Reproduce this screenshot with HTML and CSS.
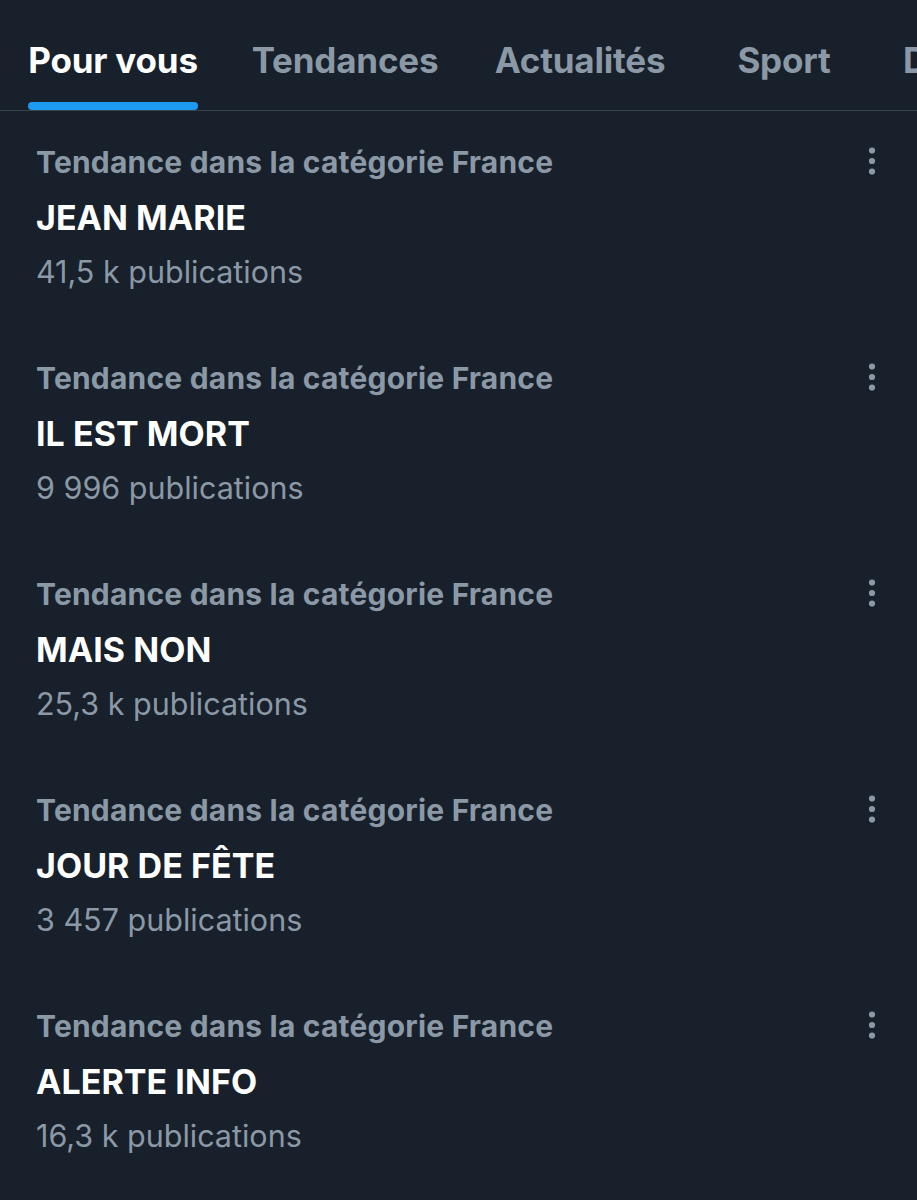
FILE: index.html
```html
<!DOCTYPE html>
<html lang="fr">
<head>
<meta charset="utf-8">
<link rel="stylesheet" href="styles.css">
</head>
<body>
<nav class="tabs">
  <div class="tab tab-active tab-1"><span class="tab-label">Pour vous</span><span class="tab-indicator"></span></div>
  <div class="tab tab-2"><span class="tab-label">Tendances</span></div>
  <div class="tab tab-3"><span class="tab-label">Actualités</span></div>
  <div class="tab tab-4"><span class="tab-label">Sport</span></div>
  <div class="tab tab-5"><span class="tab-label">Divertissement</span></div>
</nav>
<main class="list">
  <section class="trend">
    <div class="trend-head"><span class="trend-cat">Tendance dans la catégorie France</span><svg class="more" viewBox="0 0 8 30" width="8" height="30"><circle cx="4" cy="4.5" r="3.1"/><circle cx="4" cy="15" r="3.1"/><circle cx="4" cy="25.5" r="3.1"/></svg></div>
    <div class="trend-title">JEAN MARIE</div>
    <div class="trend-count">41,5 k publications</div>
  </section>
  <section class="trend">
    <div class="trend-head"><span class="trend-cat">Tendance dans la catégorie France</span><svg class="more" viewBox="0 0 8 30" width="8" height="30"><circle cx="4" cy="4.5" r="3.1"/><circle cx="4" cy="15" r="3.1"/><circle cx="4" cy="25.5" r="3.1"/></svg></div>
    <div class="trend-title">IL EST MORT</div>
    <div class="trend-count">9 996 publications</div>
  </section>
  <section class="trend">
    <div class="trend-head"><span class="trend-cat">Tendance dans la catégorie France</span><svg class="more" viewBox="0 0 8 30" width="8" height="30"><circle cx="4" cy="4.5" r="3.1"/><circle cx="4" cy="15" r="3.1"/><circle cx="4" cy="25.5" r="3.1"/></svg></div>
    <div class="trend-title">MAIS NON</div>
    <div class="trend-count">25,3 k publications</div>
  </section>
  <section class="trend">
    <div class="trend-head"><span class="trend-cat">Tendance dans la catégorie France</span><svg class="more" viewBox="0 0 8 30" width="8" height="30"><circle cx="4" cy="4.5" r="3.1"/><circle cx="4" cy="15" r="3.1"/><circle cx="4" cy="25.5" r="3.1"/></svg></div>
    <div class="trend-title">JOUR DE FÊTE</div>
    <div class="trend-count">3 457 publications</div>
  </section>
  <section class="trend">
    <div class="trend-head"><span class="trend-cat">Tendance dans la catégorie France</span><svg class="more" viewBox="0 0 8 30" width="8" height="30"><circle cx="4" cy="4.5" r="3.1"/><circle cx="4" cy="15" r="3.1"/><circle cx="4" cy="25.5" r="3.1"/></svg></div>
    <div class="trend-title">ALERTE INFO</div>
    <div class="trend-count">16,3 k publications</div>
  </section>
</main>
</body>
</html>
```

FILE: styles.css
```css
html, body {
  margin: 0;
  padding: 0;
  background: #17202b;
}
body {
  width: 917px;
  height: 1200px;
  overflow: hidden;
  font-family: Inter, Roboto, "Liberation Sans", sans-serif;
  -webkit-font-smoothing: antialiased;
}
.tabs {
  display: flex;
  height: 110px;
  border-bottom: 1px solid #38444d;
  white-space: nowrap;
  overflow: hidden;
}
.tab {
  flex: none;
  display: flex;
  flex-direction: column;
  align-items: center;
}
.tab-1 { width: 226px; }
.tab-2 { width: 238px; }
.tab-3 { width: 232px; }
.tab-4 { width: 176px; }
.tab-5 { width: 300px; align-items: flex-start; padding-left: 31px; }
.tab-label {
  font-size: 35px;
  font-weight: 700;
  color: #8b98a5;
  line-height: 40px;
  margin-top: 40px;
  letter-spacing: -0.2px;
}
.tab-active .tab-label { color: #ffffff; }
.tab-indicator {
  display: block;
  width: 170px;
  height: 8px;
  border-radius: 4px;
  background: #1d9bf0;
  margin-top: 22px;
}
.trend {
  padding: 29px 41px 35px 36px;
}
.trend-head {
  display: flex;
  justify-content: space-between;
  align-items: center;
  height: 44px;
}
.trend-cat {
  font-size: 30px;
  font-weight: 700;
  color: #8b98a5;
  line-height: 44px;
  letter-spacing: 0.2px;
}
.more {
  fill: #8b98a5;
  flex: none;
  margin-top: -2px;
}
.trend-title {
  font-size: 34px;
  font-weight: 700;
  color: #ffffff;
  line-height: 68px;
  letter-spacing: 0.05px;
}
.trend-count {
  font-size: 30.5px;
  font-weight: 400;
  color: #8b98a5;
  line-height: 40px;
}
```
